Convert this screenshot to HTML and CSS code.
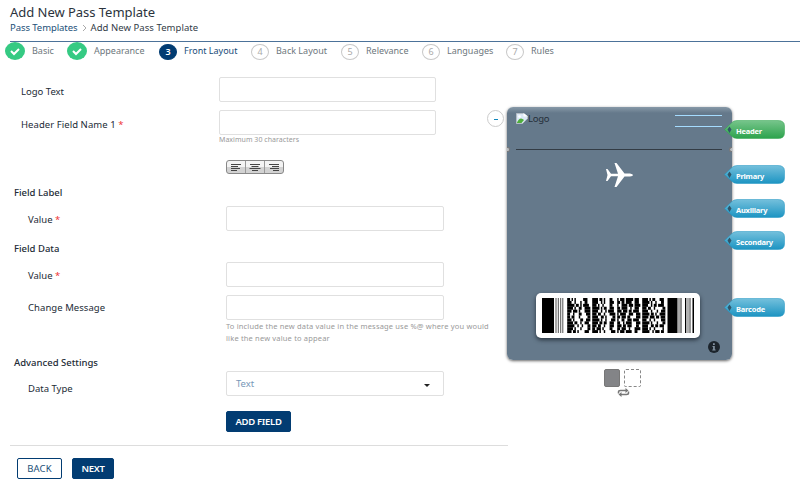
FILE: index.html
```html
<!DOCTYPE html>
<html lang="en">
<head>
<meta charset="utf-8">
<title>Add New Pass Template</title>
<link rel="stylesheet" href="styles.css">
</head>
<body>
<header class="page-head">
  <h1>Add New Pass Template</h1>
  <nav class="crumbs"><a>Pass Templates</a><svg width="5" height="8" viewBox="0 0 5 8"><path d="M1 1l3 3-3 3" fill="none" stroke="#aaa"/></svg><span>Add New Pass Template</span></nav>
</header>
<ol class="steps">
  <li class="s1"><i class="done"><svg viewBox="0 0 20 18"><path d="M6 9l3 3 5-5" fill="none" stroke="#fff" stroke-width="2"/></svg></i><span>Basic</span></li>
  <li class="s2"><i class="done"><svg viewBox="0 0 20 18"><path d="M6 9l3 3 5-5" fill="none" stroke="#fff" stroke-width="2"/></svg></i><span>Appearance</span></li>
  <li class="s3 current"><i>3</i><span>Front Layout</span></li>
  <li class="s4"><i>4</i><span>Back Layout</span></li>
  <li class="s5"><i>5</i><span>Relevance</span></li>
  <li class="s6"><i>6</i><span>Languages</span></li>
  <li class="s7"><i>7</i><span>Rules</span></li>
</ol>
<main>
  <form class="form">
    <div class="row top logo"><label>Logo Text</label><div class="box"></div></div>
    <div class="row top head"><label>Header Field Name 1 <b>*</b></label><div><div class="box"></div><small class="max">Maximum 30 characters</small></div></div>
    <div class="aligns">
      <span><svg viewBox="0 0 18 13"><path d="M4 3.5h10M4 5.5h7M4 7.5h9M4 9.5h6" stroke="#444"/></svg></span>
      <span><svg viewBox="0 0 18 13"><path d="M4 3.5h10M5.500 5.500h7M3.500 7.500h11M6 9.500h6" stroke="#444"/></svg></span>
      <span><svg viewBox="0 0 18 13"><path d="M4 3.500h10M7 5.500h7M5 7.500h9M8 9.500h6" stroke="#444"/></svg></span>
    </div>
    <h2 class="h-label">Field Label</h2>
    <div class="row val1"><label>Value <b>*</b></label><div class="box"></div></div>
    <h2 class="h-data">Field Data</h2>
    <div class="row val2"><label>Value <b>*</b></label><div class="box"></div></div>
    <div class="row msg"><label>Change Message</label><div><div class="box"></div><small class="note"><span class="n1">To include the new data value in the message use %@ where you would</span><br><span class="n2">like the new value to appear</span></small></div></div>
    <h2 class="h-adv">Advanced Settings</h2>
    <div class="row type"><label>Data Type</label><div class="box select"><span>Text</span><i></i></div></div>
    <div class="add"><span class="btn solid"><span>ADD FIELD</span></span></div>
    <div class="foot"><span class="btn back"><span>BACK</span></span><span class="btn solid next"><span>NEXT</span></span></div>
  </form>
  <section class="preview">
    <div class="minus"><i></i></div>
    <div class="stage">
      <div class="pass">
        <div class="pass-head">
          <svg class="broken" width="12" height="11" viewBox="0 0 12 11"><path d="M.5.500h7l4 3v2l-5 5h-6z" fill="#dce9f7" stroke="#b5bdc5"/><path d="M7.500 0v3.500H12z" fill="#fff"/><path d="M1 9.500Q4 3 8 7L5.500 10H1z" fill="#4fae3c"/><circle cx="3.500" cy="3.500" r="1.300" fill="#fff"/></svg>
          <span class="alt">Logo</span>
          <div class="lines"><i></i><i></i></div>
        </div>
        <div class="divider"></div>
        <svg class="plane" width="27" height="24" viewBox="0 0 27 24"><path d="M0 6h1.500l3.500 4.800h7L8.500 0h2l8 10.500h5.500q3 .5 3 1.500t-3 1.500h-5.500L10.500 24h-2l3.500-10.800H5L1.500 18H0l1.500-6z" fill="#fff"/></svg>
        <div class="code"><svg id="barcode" width="153" height="35" viewBox="0 0 153 35"></svg></div>
        <svg class="info" width="12" height="12" viewBox="0 0 12 12"><circle cx="6" cy="6" r="6" fill="#1c242c"/><path d="M4.500 5h2.300v3.500h.8v1H4.300v-1h.8V6h-.6zM5 2.200h1.800v1.700H5z" fill="#8493a2"/></svg>
        <div class="notch left"></div><div class="notch right"></div>
      </div>
      <div class="swatches"><i class="full"></i><i class="dash"></i></div>
      <svg class="swap" width="13" height="9" viewBox="0 0 13 9"><path d="M1.500 5.500V4q0-1.500 2-1.500h5.500M11.500 3.500V5q0 1.500-2 1.500H4" fill="none" stroke="#777" stroke-width="1.500"/><path d="M8.500 0L11.500 2.500 8.500 5zM4.500 4L1.500 6.500l3 2.500z" fill="#777"/></svg>
    </div>
    <div class="tags" id="tags">
      <div class="tag green t1"><span>Header</span></div>
      <div class="tag t2"><span>Primary</span></div>
      <div class="tag t3"><span>Auxiliary</span></div>
      <div class="tag t4"><span>Secondary</span></div>
      <div class="tag t5"><span>Barcode</span></div>
    </div>
  </section>
</main>
<script src="pass.js"></script>
</body>
</html>
```
FILE: styles.css
```css
* { box-sizing: border-box; }
body { margin: 0; width: 800px; height: 500px; overflow: hidden; background: #fff; color: #222b36; font: 9.5px/12px "Noto Sans", "Open Sans", sans-serif; }
h1, h2, ol { margin: 0; padding: 0; font-weight: 400; }
svg { display: block; }
.page-head { height: 42px; margin-left: 10px; padding-top: 3px; border-bottom: 1px solid #4c7299; }
h1 { font-size: 13px; line-height: 18px; color: #2b333c; letter-spacing: -.03px; }
.crumbs { display: flex; align-items: center; gap: 4px; height: 14px; font-size: 9.5px; color: #333c48; }
.crumbs a { color: #225078; letter-spacing: -.07px; }
.crumbs span { letter-spacing: .06px; }
.steps { display: flex; height: 20px; list-style: none; padding-left: 5px; color: #6d777d; font-size: 9px; }
.steps li { display: flex; gap: 7px; }
.steps li span { padding-top: 3px; white-space: nowrap; }
.steps i { display: block; width: 18px; height: 16px; margin-top: 2px; border: 1px solid #c8c8c8; border-radius: 50%; font-style: normal; text-align: center; line-height: 14px; color: #aaa; }
.steps i.done { width: 20px; height: 18px; margin-top: 0; border: 0; background: #35ca83; }
.steps .current i { background: #023c72; border-color: #023c72; color: #fff; font-weight: 600; }
.current span { color: #174b78; }
.s1 { width: 62px; } .s2 { width: 92px; } .s3 { width: 92px; } .s4 { width: 90px; } .s5 { width: 81px; } .s6 { width: 84px; }
main { display: flex; }
.form { width: 508px; flex: none; padding-top: 15px; }
.row { display: grid; grid-template-columns: 198px 265px; padding-left: 28px; }
.row.top { padding-left: 21px; }
label { padding-top: 8px; white-space: nowrap; }
label b { color: #e33; font-weight: 400; }
.logo label { padding-top: 9px; }
.box { width: 218px; height: 25px; border: 1px solid #e0e0e0; border-radius: 2px; background: #fff; }
.top .box { width: 217px; }
.logo { height: 33px; }
.head { height: 50px; }
.head label { padding-top: 9px; letter-spacing: .06px; }
small { display: block; color: #999; font-size: 7px; }
.max { line-height: 10px; letter-spacing: .04px; }
.aligns { display: flex; width: 58px; height: 14px; margin-left: 226px; border: 1px solid #888; border-radius: 3px; background: linear-gradient(#f3f3f3 50%, #d2d2d2 50%); }
.aligns span { flex: 1; border-right: 1px solid #999; }
.aligns span:last-child { border: 0; }
h2 { padding-left: 14px; font-size: 9.5px; line-height: 14px; font-weight: 500; }
.h-label { margin-top: 12px; }
.val1 { margin-top: 6px; }
.h-data { margin-top: 11px; }
.val2 { margin-top: 6px; }
.msg { margin-top: 8px; height: 60px; }
.msg label { padding-top: 7px; letter-spacing: .06px; }
.note { font-size: 7.5px; white-space: nowrap; letter-spacing: .17px; }
.h-adv { margin-top: 1px; }
.type label { padding-top: 12px; }
.type { margin-top: 1px; }
.select { display: flex; justify-content: space-between; padding: 6px 13px 0 9px; color: #7797b8; }
.select i { width: 0; height: 0; margin-top: 6px; border: 3px solid transparent; border-top-color: #222; border-bottom: 0; }
.add { padding: 15px 0 13px 226px; }
.btn { display: flex; align-items: center; justify-content: center; height: 21px; border: 1px solid #023c72; border-radius: 2px; color: #225078; }
.solid { width: 65px; background: #023c72; color: #fff; font-weight: 600; letter-spacing: -.3px; }
.foot { display: flex; gap: 10px; margin-left: 10px; padding: 12px 0 0 7px; border-top: 1px solid #ddd; }
.back { width: 45px; letter-spacing: .15px; }
.next { width: 42px; }
.preview { position: relative; flex: 1; display: flex; padding-top: 44px; margin-left: -21px; }
.minus { width: 17px; height: 17px; margin-top: 4px; border: 1px solid #ccc; border-radius: 50%; display: flex; align-items: center; justify-content: center; }
.minus i { width: 4px; height: 1px; background: #1088bd; margin-top: 2px; }
.stage { width: 225px; margin-left: 3px; }
.pass { position: relative; height: 253px; margin-top: 1px; border-radius: 6px; background: linear-gradient(#8799a8, #65798b 6px); box-shadow: 0 1px 3px #666; padding: 5px 10px 5px 9px; }
.pass-head { display: flex; height: 37px; color: #26303a; font-size: 9.5px; }
.alt { padding-top: 1px; letter-spacing: -.3px; }
.broken { margin-top: 1px; }
.lines { width: 47px; margin-left: auto; padding-top: 3px; display: grid; grid-template-rows: 11px 11px; }
.lines i { border-top: 1px solid #a5dcff; }
.divider { height: 1px; background: #333c45; }
.plane { margin: 13px auto 0 90px; }
.code { width: 164px; height: 45px; margin: 106px 0 0 20px; padding: 5px 5px 5px 6px; border-radius: 5px; background: #fff; box-shadow: 0 2px 4px #29343f; }
.info { margin: 3px 2.5px 0 auto; }
.notch { position: absolute; top: 40px; width: 3px; height: 5px; background: #b9bec3; border: 1px solid #777; }
.notch.left { left: 0; border-radius: 0 3px 3px 0; border-left: 0; }
.notch.right { right: 0; border-radius: 3px 0 0 3px; border-right: 0; }
.swatches { display: flex; gap: 4px; margin: 9px 0 0 97px; }
.swatches i { width: 16px; height: 18px; border-radius: 2px; background: #838487; border: 1px solid #777; }
.swatches .dash { width: 17px; background: #fff; border: 1px dashed #888; }
.swap { margin: 1px 0 0 110px; }
.tags { position: absolute; left: 237px; top: 58px; width: 61px; display: flex; flex-direction: column; }
.tag { position: relative; height: 19px; color: #fff; font-size: 7.5px; font-weight: 700; line-height: 18px; letter-spacing: -.22px; }
.tag svg { position: absolute; left: 0; top: 0; }
.tag span { position: relative; display: block; padding: 2px 0 0 12px; }
.t2 { margin-top: 26px; } .t3 { margin-top: 15px; } .t4 { margin-top: 13px; } .t5 { margin-top: 48px; }
```
FILE: pass.js
```js
// Barcode: start pattern, four codeword columns, stop pattern.
const rects = [[0, 12, "#000"], [13.5, 1, "#555"], [15.800, 1, "#555"], [18.200, 1, "#555"], [20.300, 1, "#555"],
  [125.500, 10, "#000"], [136.500, 1, "#555"], [138.500, 1, "#222"], [143, 1.300, "#000"], [145.500, 1, "#666"], [147.500, 1, "#333"], [150.500, 1.500, "#000"]];
let out = rects.map(r => `<rect x="${r[0]}" width="${r[1]}" height="35" fill="${r[2]}"/>`).join("");

// Codeword rows: bar and space widths in modules, 17 per codeword.
const words = [
  ["21111533", "32131223", "51211142", "41122241", "31311341", "22132331", "21231521", "31142231", "41221232", "52121321", "41131421", "31211432"],
  ["41211323", "42111332", "31121423", "51112232", "42121142", "31221341", "42211421", "51121331", "41212232", "31221332", "21311423", "41121431"],
  ["11315132", "21214232", "12413141", "21421232", "31312142", "11423231", "21312431", "12223142", "22114331", "31213322", "21321341", "11314223"],
  ["41112332", "51121322", "42112142", "31221521", "42131231", "51211241", "41312131", "32121431", "51131321", "42212132", "41121512", "52113122"]
];
const rowHeight = 35 / 12;
words.forEach((column, c) => column.forEach((word, r) => {
  const widths = [...word].map(Number);
  const module = 24.600 / widths.reduce((a, b) => a + b);
  let x = 25.200 + c * 25;
  widths.forEach((n, i) => {
    if (i % 2 === 0) out += `<rect x="${x}" y="${r * rowHeight}" width="${n * module}" height="${rowHeight + .1}"/>`;
    x += n * module;
  });
}));
document.getElementById("barcode").innerHTML = out;

// Callout shape behind each tag label.
document.querySelectorAll(".tag").forEach((tag, i) => {
  const green = tag.classList.contains("green");
  const [a, b] = green ? ["#77c58c", "#2da34c"] : ["#74c0dc", "#1c94c2"];
  tag.insertAdjacentHTML("afterbegin", `<svg width="61" height="19" viewBox="0 0 61 19"><defs><linearGradient id="g${i}" x2="0" y2="1"><stop stop-color="${a}"/><stop offset="1" stop-color="${b}"/></linearGradient></defs><path d="M.5 9.500L8 2.500Q10 .5 13 .5H54Q60.500.500 60.500 6v7q0 5.500-6.500 5.500H13q-3 0-5-2z" fill="url(#g${i})" stroke="${b}" stroke-opacity=".5"/><path d="M5.500 6.500L7.500 9.500l-2 3.500-2-3.500z" fill="#315568"/></svg>`);
});
```
